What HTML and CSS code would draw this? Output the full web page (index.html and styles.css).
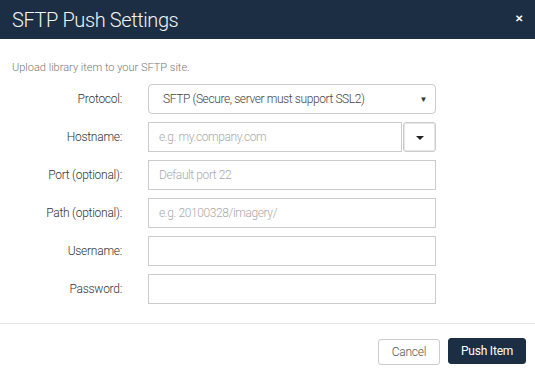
FILE: index.html
```html
<!DOCTYPE html>
<html lang="en">
<head>
  <meta charset="UTF-8" />
  <title>SFTP Push Settings</title>
  <link rel="stylesheet" href="styles.css">
</head>
<body>
  <div class="modal">
    <!-- Header -->
    <div class="modal-header">
      <h1>SFTP Push Settings</h1>
      <button class="close-btn" type="button">&#x2715;</button>
    </div>

    <!-- Body -->
    <div class="modal-body">
      <p class="intro">Upload library item to your SFTP site.</p>
      <form class="push-form">
        <label>Protocol:</label>
        <div class="select-box">
          <span>SFTP (Secure, server must support SSL2)</span>
          <span class="caret">&#9660;</span>
        </div>

        <label>Hostname:</label>
        <div class="input-group">
          <input type="text" placeholder="e.g. my.company.com">
          <button class="addon-btn" type="button"><span class="caret-sm"></span></button>
        </div>

        <label>Port (optional):</label>
        <input type="text" placeholder="Default port 22">

        <label>Path (optional):</label>
        <input type="text" placeholder="e.g. 20100328/imagery/">

        <label>Username:</label>
        <input type="text">

        <label>Password:</label>
        <input type="password">
      </form>
    </div>

    <!-- Footer -->
    <div class="modal-footer">
      <button class="btn btn-default" type="button">Cancel</button>
      <button class="btn btn-primary" type="button">Push Item</button>
    </div>
  </div>
</body>
</html>
```

FILE: styles.css
```css
/* ===== Reset ===== */
* {
  margin: 0;
  padding: 0;
  box-sizing: border-box;
  font-family: 'Roboto', 'Liberation Sans', sans-serif;
}
body {
  background: #fff;
  width: 535px;
  height: 377px;
  overflow: hidden;
}

/* ===== Header ===== */
.modal-header {
  height: 39px;
  background: #1b2e44;
  display: flex;
  align-items: center;
  justify-content: space-between;
  padding: 0 12px 0 12px;
}
.modal-header h1 {
  color: #f2f4f6;
  font-size: 20px;
  font-weight: 300;
  letter-spacing: -0.4px;
  padding-top: 1px;
}
.close-btn {
  background: none;
  border: none;
  color: #fff;
  font-size: 10px;
  font-weight: 700;
  cursor: pointer;
  margin-top: -2px;
}

/* ===== Body ===== */
.modal-body {
  padding: 22px 12px 0;
}
.intro {
  font-size: 11px;
  font-weight: 300;
  color: #777;
  line-height: 13px;
}
.push-form {
  display: grid;
  grid-template-columns: 110px 288px;
  column-gap: 26px;
  row-gap: 8px;
  align-items: center;
  margin-top: 10px;
}
.push-form label {
  text-align: right;
  font-size: 12px;
  font-weight: 300;
  color: #333;
  letter-spacing: -0.25px;
}
.push-form input,
.select-box {
  height: 30px;
  width: 100%;
  border: 1px solid #ccc;
  border-radius: 0;
  padding: 0 10px;
  font-size: 12px;
  font-weight: 300;
  color: #333;
  letter-spacing: -0.4px;
  outline: none;
}
.push-form input::placeholder {
  color: #aaa;
}
.select-box {
  display: flex;
  align-items: center;
  justify-content: space-between;
  border-radius: 4px;
  padding: 0 8px 0 14px;
  color: #444;
}
.caret {
  font-size: 8px;
  color: #333;
}

.input-group {
  display: flex;
  height: 30px;
}
.input-group input {
  flex: 1;
  min-width: 0;
}
.addon-btn {
  width: 33px;
  height: 30px;
  background: #fff;
  border: 1px solid #ccc;
  border-radius: 3px;
  box-shadow: inset 0 0 0 1px #e6e6e6;
  display: flex;
  align-items: center;
  justify-content: center;
  margin-left: 1px;
}
.caret-sm {
  width: 0;
  height: 0;
  border-left: 4px solid transparent;
  border-right: 4px solid transparent;
  border-top: 4px solid #222;
  margin-top: 2px;
}

/* ===== Footer ===== */
.modal-footer {
  margin-top: 19px;
  border-top: 1px solid #e5e5e5;
  display: flex;
  justify-content: flex-end;
  gap: 8px;
  padding: 14px 9px 0;
}
.btn {
  height: 26px;
  border-radius: 3px;
  font-size: 12px;
  font-weight: 400;
  letter-spacing: -0.2px;
  cursor: pointer;
}
.btn-default {
  width: 62px;
  margin-top: 1px;
  background: #fff;
  color: #555;
  font-weight: 300;
  border: 1px solid #ccc;
}
.btn-primary {
  width: 78px;
  background: #1b2e44;
  color: #fff;
  border: 1px solid #1b2e44;
}
```
